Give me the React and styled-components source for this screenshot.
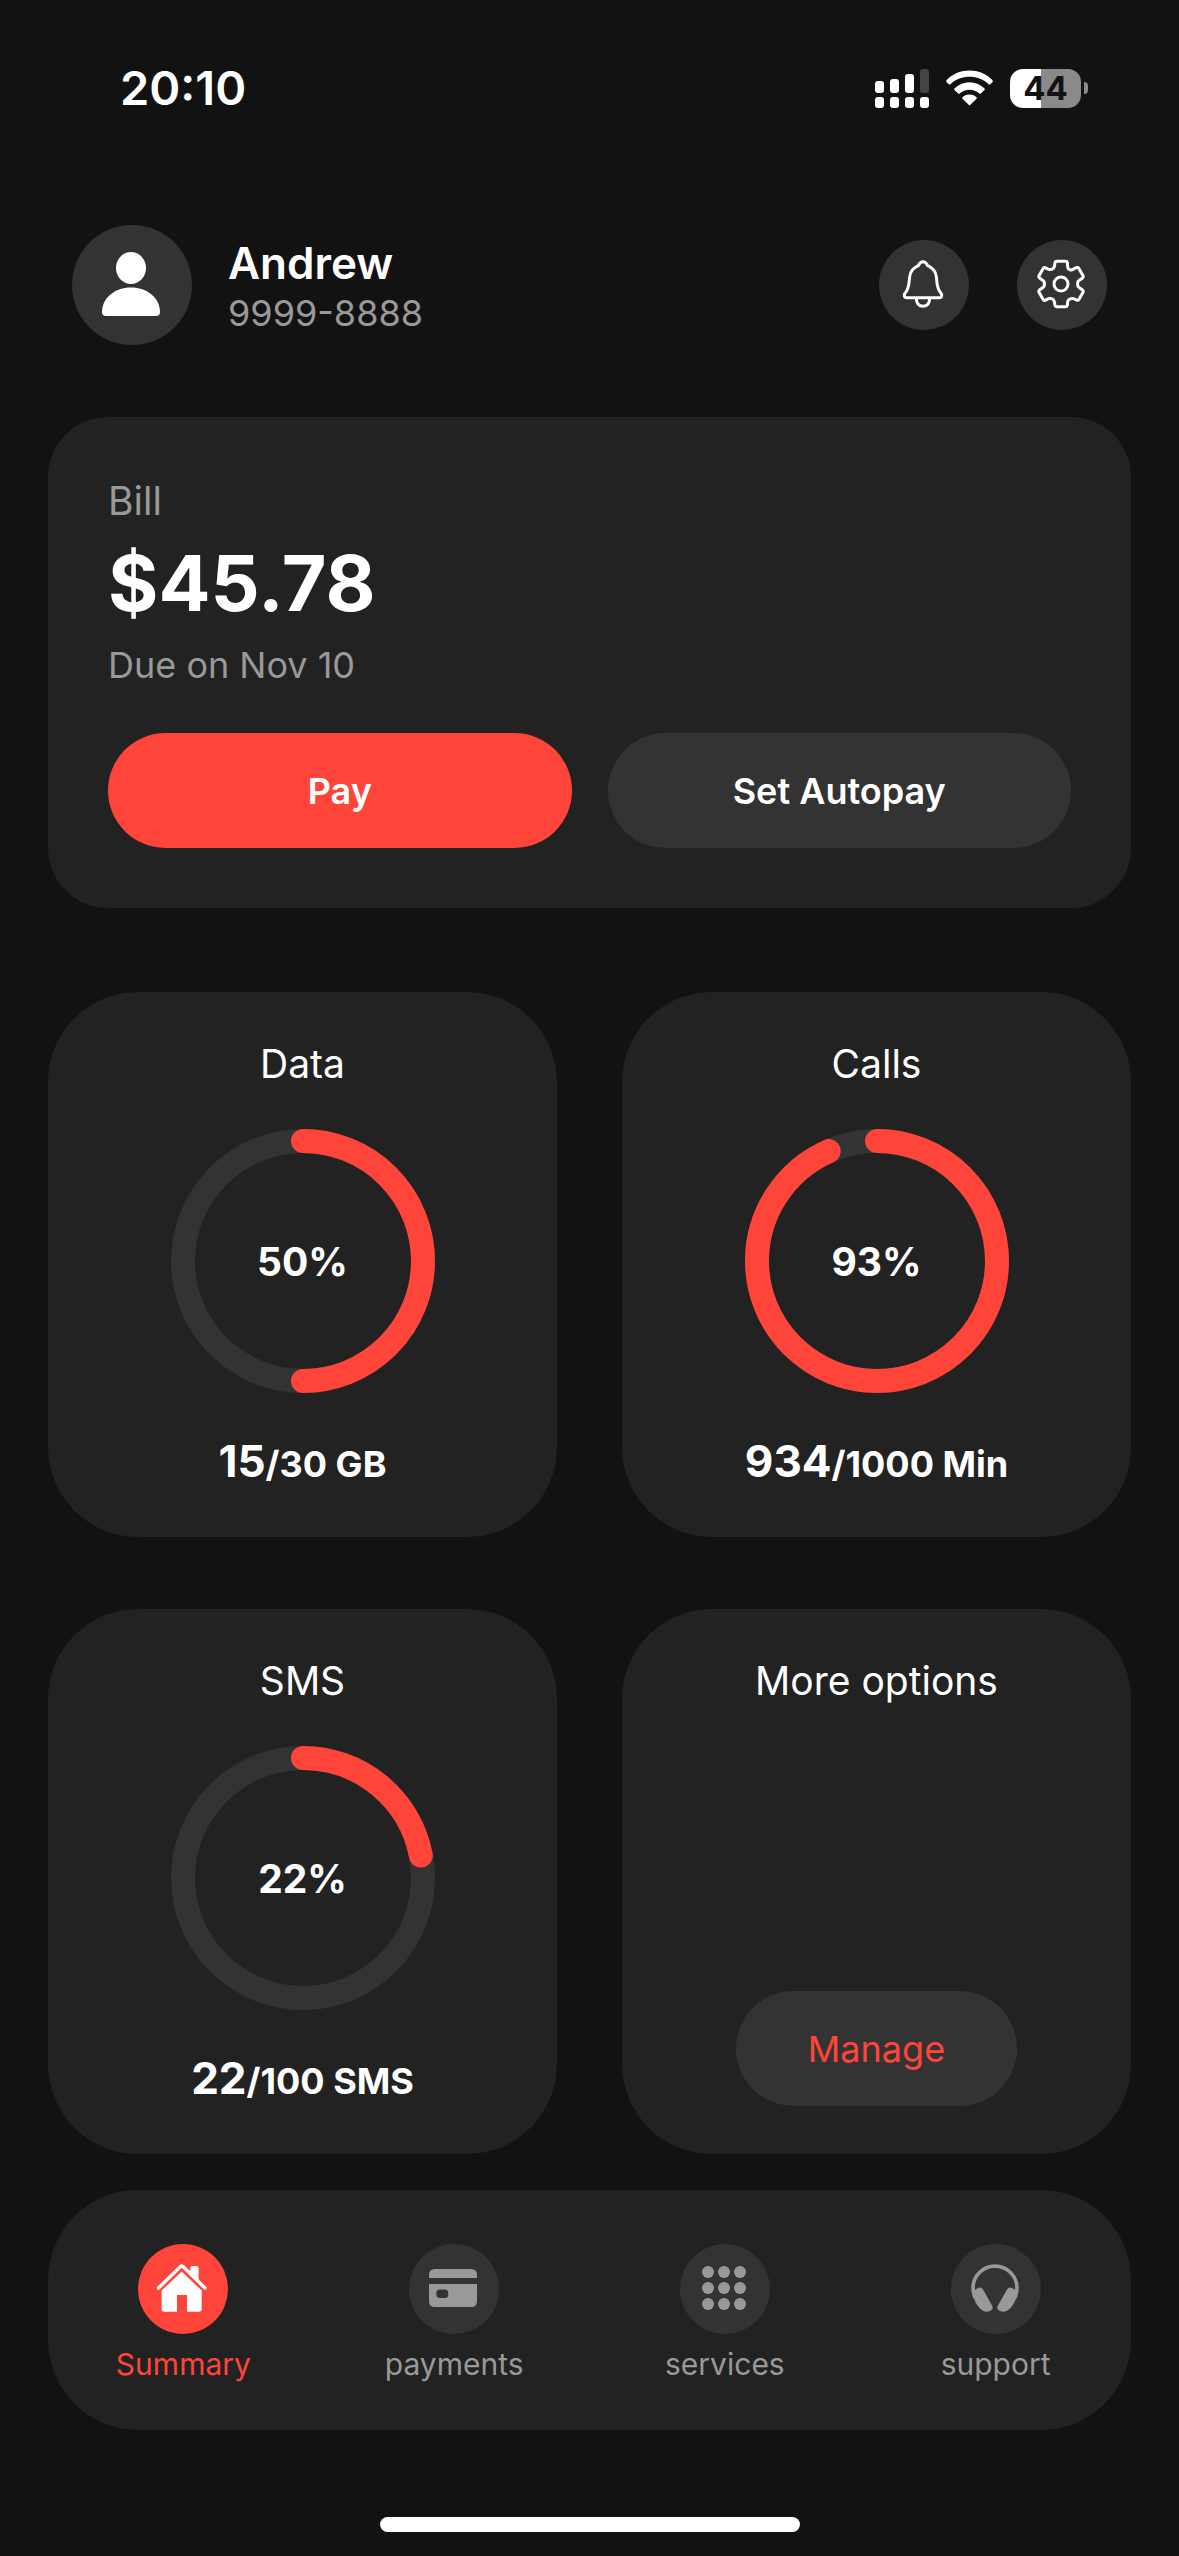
import React from "react";
import styled, { createGlobalStyle, ThemeProvider } from "styled-components";

const theme = {
  page: "#121212",
  card: "#222222",
  chip: "#333333",
  accent: "#ff453a",
  text: "#ffffff",
  muted: "#999999",
};

const GlobalStyle = createGlobalStyle`
  *, *::before, *::after { box-sizing: border-box; }
  body {
    margin: 0;
    background: ${theme.page};
    color: ${theme.text};
    font-family: Inter, Roboto, "Liberation Sans", sans-serif;
    font-size: 36px;
  }
  h1, h2, p { margin: 0; font-weight: 400; }
  button { font: inherit; border: 0; padding: 0; cursor: pointer; }
  svg { display: block; }
`;

const Screen = styled.div`
  min-height: 100vh;
  display: flex;
  flex-direction: column;
`;

const StatusBar = styled.div`
  display: flex;
  align-items: center;
  justify-content: space-between;
  padding: 60px 91px 0 120px;
`;

const Clock = styled.time`
  font-size: 47px;
  font-weight: 600;
  line-height: 56px;
`;

const StatusIcons = styled.div`
  display: flex;
  align-items: center;
  gap: 17px;
`;

const Battery = styled.div`
  display: flex;
  align-items: center;
  gap: 3px;
`;

const BatteryBody = styled.div`
  width: 71px;
  height: 39px;
  border-radius: 13px;
  background: linear-gradient(
    to right,
    #ffffff ${(p) => p.$level}%,
    #8a8a8a ${(p) => p.$level}%
  );
  color: ${(p) => p.theme.page};
  font-size: 33px;
  font-weight: 700;
  line-height: 39px;
  text-align: center;
`;

const BatteryCap = styled.span`
  width: 4px;
  height: 12px;
  border-radius: 0 4px 4px 0;
  background: #8a8a8a;
`;

const Header = styled.header`
  display: flex;
  align-items: center;
  gap: 36px;
  padding: 109px 72px 72px;
`;

const Avatar = styled.div`
  width: 120px;
  height: 120px;
  border-radius: 50%;
  background: ${(p) => p.theme.chip};
`;

const Identity = styled.div`
  flex: 1;
`;

const UserName = styled.h1`
  font-size: 44px;
  font-weight: 600;
  line-height: 56px;
`;

const Phone = styled.p`
  font-size: 36px;
  line-height: 44px;
  color: ${(p) => p.theme.muted};
`;

const HeaderActions = styled.div`
  display: flex;
  gap: 48px;
`;

const RoundButton = styled.button`
  width: 90px;
  height: 90px;
  border-radius: 50%;
  background: ${(p) => p.theme.chip};
`;

const Main = styled.main`
  padding: 0 48px;
`;

const BillCard = styled.section`
  display: flex;
  flex-direction: column;
  gap: 12px;
  padding: 60px;
  border-radius: 60px;
  background: ${(p) => p.theme.card};
`;

const BillLabel = styled.h2`
  font-size: 39px;
  line-height: 48px;
  color: ${(p) => p.theme.muted};
`;

const BillAmount = styled.p`
  font-size: 77px;
  font-weight: 700;
  line-height: 92px;
`;

const BillDue = styled.p`
  font-size: 36px;
  line-height: 48px;
  color: ${(p) => p.theme.muted};
`;

const BillActions = styled.div`
  display: grid;
  grid-template-columns: 1fr 1fr;
  gap: 36px;
  padding-top: 32px;
`;

const PillButton = styled.button`
  height: 115px;
  padding: 0 72px;
  border-radius: 60px;
  background: ${(p) => (p.$primary ? p.theme.accent : p.theme.chip)};
  color: ${(p) => (p.$link ? p.theme.accent : p.theme.text)};
  font-size: 36px;
  font-weight: ${(p) => (p.$link ? 400 : 600)};
`;

const UsageGrid = styled.div`
  display: grid;
  grid-template-columns: 1fr 1fr;
  gap: 72px 65px;
  padding-top: 84px;
`;

const UsageCard = styled.section`
  display: flex;
  flex-direction: column;
  align-items: center;
  justify-content: space-between;
  gap: 41px;
  padding: 48px 24px;
  border-radius: 90px;
  background: ${(p) => p.theme.card};
`;

const CardTitle = styled.h2`
  font-size: 39px;
  line-height: 48px;
`;

const Ring = styled.div`
  display: grid;
  place-items: center;

  & > * {
    grid-area: 1 / 1;
  }
`;

const Percent = styled.span`
  font-size: 39px;
  font-weight: 700;
`;

const Usage = styled.p`
  font-size: 44px;
  font-weight: 700;
  line-height: 55px;
`;

const UsageTotal = styled.span`
  font-size: 36px;
  line-height: 1;
`;

const TabBar = styled.nav`
  display: grid;
  grid-template-columns: repeat(4, 1fr);
  margin: 36px 48px 0;
  padding: 54px 0 46px;
  border-radius: 90px;
  background: ${(p) => p.theme.card};
`;

const Tab = styled.a`
  display: flex;
  flex-direction: column;
  align-items: center;
  gap: 10px;
  color: ${(p) => (p.$active ? p.theme.accent : p.theme.muted)};
  font-size: 30px;
  line-height: 40px;
  text-decoration: none;
`;

const TabIcon = styled.span`
  width: 90px;
  height: 90px;
  border-radius: 50%;
  background: ${(p) => (p.$active ? p.theme.accent : p.theme.chip)};
  color: ${(p) => (p.$active ? p.theme.text : p.theme.muted)};
`;

const HomeIndicator = styled.div`
  width: 420px;
  height: 15px;
  margin: 87px auto 24px;
  border-radius: 8px;
  background: ${(p) => p.theme.text};
`;

function SignalIcon() {
  return (
    <svg width="54" height="39" viewBox="0 0 54 39" fill="#fff" aria-hidden="true">
      <rect x="0" y="12" width="9" height="12" rx="3" />
      <rect x="15" y="10" width="9" height="14" rx="3" />
      <rect x="30" y="5" width="9" height="19" rx="3" />
      <rect x="45" y="0" width="9" height="24" rx="3" fill="#444" />
      <rect x="0" y="28" width="9" height="11" rx="3" />
      <rect x="15" y="28" width="9" height="11" rx="3" />
      <rect x="30" y="28" width="9" height="11" rx="3" />
      <rect x="45" y="28" width="9" height="11" rx="3" />
    </svg>
  );
}

function WifiIcon() {
  return (
    <svg width="47" height="36" viewBox="0 0 141 108" fill="#fff" aria-hidden="true">
      <path d="M2 30C39-8 102-8 139 30Q142 34 139 37L133 43Q130 45 127 42C96 13 45 13 14 42Q11 45 8 43L2 37Q-1 34 2 30Z" />
      <path d="M26 55C51 31 90 31 115 55Q118 58 115 61L105 70Q102 73 99 70C84 56 57 56 42 70Q39 73 36 70L26 61Q23 58 26 55Z" />
      <path d="M50 81C62 71 79 71 91 81Q94 84 91 87L73 104Q70 107 68 104L50 87Q47 84 50 81Z" />
    </svg>
  );
}

function UserIcon() {
  return (
    <svg width="120" height="120" viewBox="0 0 120 120" fill="#fff" aria-hidden="true">
      <ellipse cx="59" cy="43" rx="15" ry="16" />
      <path d="M34 91H84Q88 91 88 87C88 73 75 62.500 59 62.500S30 73 30 87Q30 91 34 91Z" />
    </svg>
  );
}

function BellIcon() {
  return (
    <svg
      width="90"
      height="90"
      viewBox="117 600 270 270"
      fill="none"
      stroke="#fff"
      strokeWidth="9"
      strokeLinejoin="round"
      strokeLinecap="round"
      aria-hidden="true"
    >
      <path d="M249 665C242 665 238 670 235 677C221 683 211 694 209 710C206 735 208 742 197 757Q192 763 193 768Q194 773 200 773H298Q304 773 305 768Q306 763 301 757C290 742 292 735 289 710C287 694 277 683 263 677C260 670 256 665 249 665Z" />
      <path d="M229 775C229 790 237 799 249 799S269 790 269 775" />
    </svg>
  );
}

function GearIcon() {
  return (
    <svg
      width="90"
      height="90"
      viewBox="531 600 270 270"
      fill="none"
      stroke="#fff"
      strokeWidth="9"
      strokeLinejoin="round"
      aria-hidden="true"
    >
      <path d="M650 664H677Q681 664 682 668L683 681Q684 688 690 689L695 690Q700 688 706 684L712 682Q715 682 717 686L729 707Q731 711 728 714L718 721Q713 724 713 728V736Q713 740 718 743L728 750Q731 753 729 757L717 778Q715 781 712 781L701 776Q695 774 690 777Q684 779 683 785L682 796Q681 800 677 800H650Q646 800 645 796L643 785Q642 779 637 777Q631 774 626 776L615 781Q611 782 609 778L597 757Q595 753 598 750L608 743Q613 740 613 736V728Q613 724 608 721L599 714Q595 711 597 707L609 686Q611 682 615 683L626 688Q631 690 637 687Q642 685 643 680L645 668Q646 664 650 664Z" />
      <circle cx="663" cy="732" r="21" />
    </svg>
  );
}

function HomeIcon() {
  return (
    <svg width="90" height="90" viewBox="0 0 90 90" fill="currentColor" aria-hidden="true">
      <path
        d="M20.500 44L42.500 22.500Q43.700 21.500 45 22.500L67 44"
        fill="none"
        stroke="currentColor"
        strokeWidth="3.400"
        strokeLinecap="round"
      />
      <path d="M52.300 29V24Q52.300 22 54.300 22H58.600Q60.600 22 60.600 24V37.500Z" />
      <path d="M43.700 27.500L63.700 46.500V65Q63.700 67.700 61 67.700H49V51H39V67.700H26.400Q23.600 67.700 23.600 65V46.500Z" />
    </svg>
  );
}

function CardIcon() {
  return (
    <svg width="90" height="90" viewBox="0 0 90 90" fill="currentColor" aria-hidden="true">
      <path d="M20 34V31Q20 25 26 25H62Q68 25 68 31V34Z" />
      <path
        fillRule="evenodd"
        d="M20 40H68V57Q68 63 62 63H26Q20 63 20 57ZM31 45.500Q27.300 45.500 27.300 49V50.500Q27.300 54 31 54H35.500Q39.300 54 39.300 50.500V49Q39.300 45.500 35.500 45.500Z"
      />
    </svg>
  );
}

function GridIcon() {
  const stops = [28, 44, 60];
  return (
    <svg width="90" height="90" viewBox="0 0 90 90" fill="currentColor" aria-hidden="true">
      {stops.map((y) => stops.map((x) => <circle key={`${x}-${y}`} cx={x} cy={y} r="6" />))}
    </svg>
  );
}

function HeadphonesIcon() {
  return (
    <svg width="90" height="90" viewBox="0 0 90 90" fill="currentColor" aria-hidden="true">
      <path
        d="M24 54C20 43 22 35 28.500 28.500C37 20 51 20 59.500 28.500C66 35 68 43 64 54"
        fill="none"
        stroke="currentColor"
        strokeWidth="3.600"
      />
      <path d="M23 46.500L27 44Q30 42.500 32 45.500L41.300 62C43 65.500 39 68 35 67.700C28 67 23 57 21.500 49Z" />
      <path d="M65 46.500L61 44Q58 42.500 56 45.500L46.700 62C45 65.500 49 68 53 67.700C60 67 65 57 66.500 49Z" />
    </svg>
  );
}

function ProgressRing({ percent }) {
  return (
    <Ring>
      <svg width="264" height="264" viewBox="0 0 264 264" fill="none" strokeWidth="24" aria-hidden="true">
        <circle cx="132" cy="132" r="120" stroke={theme.chip} />
        <circle
          cx="132"
          cy="132"
          r="120"
          stroke={theme.accent}
          strokeLinecap="round"
          pathLength="100"
          strokeDasharray={`${percent} 100`}
          transform="rotate(-90 132 132)"
        />
      </svg>
      <Percent>{Math.floor(percent)}%</Percent>
    </Ring>
  );
}

const plans = [
  { title: "Data", percent: 50, used: "15", total: "/30 GB" },
  { title: "Calls", percent: 93.4, used: "934", total: "/1000 Min" },
  { title: "SMS", percent: 22, used: "22", total: "/100 SMS" },
];

const tabs = [
  { label: "Summary", Icon: HomeIcon, active: true },
  { label: "payments", Icon: CardIcon },
  { label: "services", Icon: GridIcon },
  { label: "support", Icon: HeadphonesIcon },
];

export default function App() {
  return (
    <ThemeProvider theme={theme}>
      <GlobalStyle />
      <Screen>
        <StatusBar>
          <Clock>20:10</Clock>
          <StatusIcons>
            <SignalIcon />
            <WifiIcon />
            <Battery>
              <BatteryBody $level={44}>44</BatteryBody>
              <BatteryCap />
            </Battery>
          </StatusIcons>
        </StatusBar>

        <Header>
          <Avatar>
            <UserIcon />
          </Avatar>
          <Identity>
            <UserName>Andrew</UserName>
            <Phone>9999-8888</Phone>
          </Identity>
          <HeaderActions>
            <RoundButton aria-label="Notifications">
              <BellIcon />
            </RoundButton>
            <RoundButton aria-label="Settings">
              <GearIcon />
            </RoundButton>
          </HeaderActions>
        </Header>

        <Main>
          <BillCard>
            <BillLabel>Bill</BillLabel>
            <BillAmount>$45.78</BillAmount>
            <BillDue>Due on Nov 10</BillDue>
            <BillActions>
              <PillButton $primary>Pay</PillButton>
              <PillButton>Set Autopay</PillButton>
            </BillActions>
          </BillCard>

          <UsageGrid>
            {plans.map((plan) => (
              <UsageCard key={plan.title}>
                <CardTitle>{plan.title}</CardTitle>
                <ProgressRing percent={plan.percent} />
                <Usage>
                  {plan.used}
                  <UsageTotal>{plan.total}</UsageTotal>
                </Usage>
              </UsageCard>
            ))}
            <UsageCard>
              <CardTitle>More options</CardTitle>
              <PillButton $link>Manage</PillButton>
            </UsageCard>
          </UsageGrid>
        </Main>

        <TabBar aria-label="Primary">
          {tabs.map(({ label, Icon, active }) => (
            <Tab key={label} href="#" $active={active} aria-current={active ? "page" : undefined}>
              <TabIcon $active={active}>
                <Icon />
              </TabIcon>
              {label}
            </Tab>
          ))}
        </TabBar>

        <HomeIndicator />
      </Screen>
    </ThemeProvider>
  );
}
